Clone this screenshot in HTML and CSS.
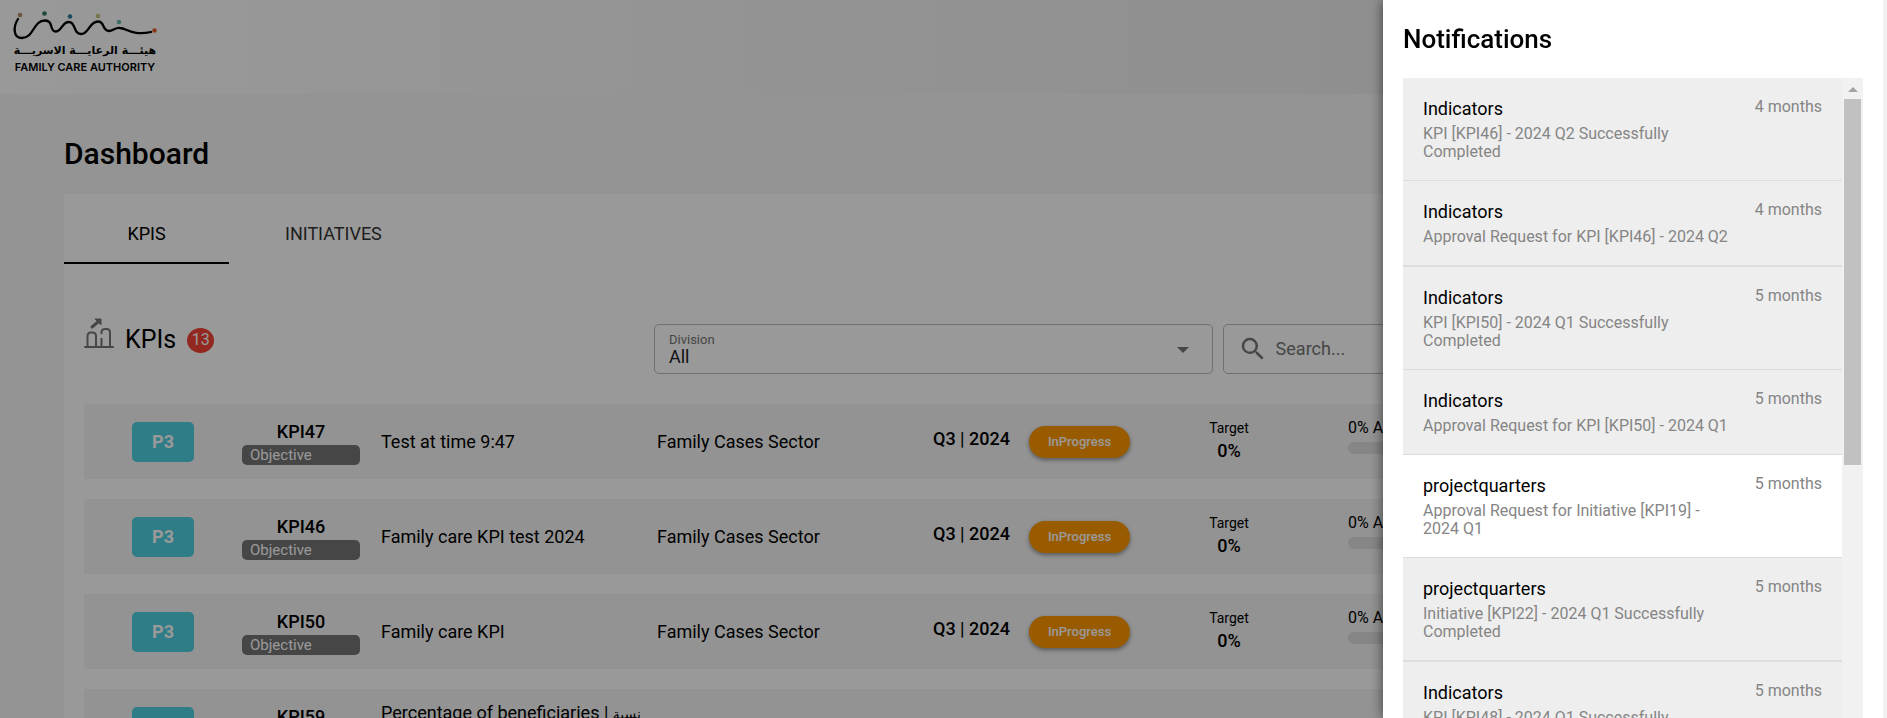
FILE: index.html
```html
<!DOCTYPE html>
<html lang="en">
<head>
<meta charset="utf-8">
<title>Dashboard</title>
<link rel="stylesheet" href="styles.css">
</head>
<body>
<div class="page">
  <header class="topbar">
    <div class="logo">
      <svg class="logo-mark" viewBox="0 0 146 32" aria-hidden="true">
        <path d="M6 9C1 17 1 28 10 28C22 28 21 10.500 33 10.500C42 10.500 37 22 44 21.500C50 21 50 12 57 12C64 12 61 24 69 24C77 24 77 11.500 86 11.500C93 11.500 90 21 97 21C101 21 103 17.500 108 18C115 18.500 121 26 139 22" fill="none" stroke="#000" stroke-width="2.300" stroke-linecap="round"/>
        <circle cx="8" cy="5" r="2.300" fill="#b0906a"/><circle cx="32.500" cy="3.500" r="2.300" fill="#2f7a60"/><circle cx="58" cy="6.500" r="2.300" fill="#2c7fa0"/><circle cx="86" cy="6" r="2.300" fill="#c8c47a"/><circle cx="107" cy="12" r="2.300" fill="#69b8ab"/><circle cx="142.500" cy="20.500" r="2.300" fill="#e0622a"/>
      </svg>
      <span class="logo-ar" lang="ar" dir="rtl">هيئـــة الرعايـــة الاسريـــة</span>
      <span class="logo-en">FAMILY CARE AUTHORITY</span>
    </div>
  </header>
  <main class="main">
    <h1 class="title">Dashboard</h1>
    <section class="card">
      <div class="tabs" role="tablist">
        <button class="tab tab-active" role="tab" aria-selected="true">KPIS</button>
        <button class="tab" role="tab" aria-selected="false">INITIATIVES</button>
      </div>
      <div class="panel">
        <div class="toolbar">
          <div class="heading">
            <svg class="kpi-icon" viewBox="0 0 30 32" aria-hidden="true" fill="none" stroke="#777" stroke-width="2">
              <path d="M1 29H29" stroke-linecap="round"/>
              <path d="M3.500 29V18Q3.500 14.500 7 14.500H8.500Q12 14.500 12 18V29M17.500 16V14.500Q17.500 11 21 11H22.500Q26 11 26 14.500V29M17.500 20V29"/>
              <path d="M8 9L14 4" stroke-width="3" stroke-linecap="round"/>
              <path d="M11 1H17V7Z" fill="#777" stroke-width="1"/>
            </svg>
            <h2 class="subtitle">KPIs</h2>
            <span class="count">13</span>
          </div>
          <div class="field select-field">
            <label class="field-label" for="division">Division</label>
            <select class="select" id="division"><option>All</option></select>
            <svg class="caret" viewBox="0 0 12 6" aria-hidden="true"><path d="M0 0H12L6 6Z" fill="#757575"/></svg>
          </div>
          <div class="field search-field">
            <svg class="search-icon" viewBox="0 0 24 24" aria-hidden="true"><path fill="#757575" d="M15.5 14h-.79l-.28-.27A6.47 6.47 0 0 0 16 9.5 6.5 6.5 0 1 0 9.5 16c1.61 0 3.09-.59 4.23-1.57l.27.28v.79l5 4.99L20.490 19l-4.990-5zm-6 0C7.010 14 5 11.990 5 9.500S7.010 5 9.500 5 14 7.010 14 9.500 11.990 14 9.500 14z"/></svg>
            <input class="search" type="text" placeholder="Search..." aria-label="Search">
          </div>
        </div>
        <div class="rows">
          <article class="row">
            <span class="priority">P3</span>
            <div class="code"><strong>KPI47</strong><span class="tag">Objective</span></div>
            <span>Test at time 9:47</span><span>Family Cases Sector</span>
            <span class="period">Q3 | 2024</span><button class="status">InProgress</button>
            <div class="target"><span class="target-label">Target</span><strong>0%</strong></div>
            <div class="progress"><span class="small">0% Achieved</span><span class="bar"></span></div>
          </article>
          <article class="row">
            <span class="priority">P3</span>
            <div class="code"><strong>KPI46</strong><span class="tag">Objective</span></div>
            <span>Family care KPI test 2024</span><span>Family Cases Sector</span>
            <span class="period">Q3 | 2024</span><button class="status">InProgress</button>
            <div class="target"><span class="target-label">Target</span><strong>0%</strong></div>
            <div class="progress"><span class="small">0% Achieved</span><span class="bar"></span></div>
          </article>
          <article class="row">
            <span class="priority">P3</span>
            <div class="code"><strong>KPI50</strong><span class="tag">Objective</span></div>
            <span>Family care KPI</span><span>Family Cases Sector</span>
            <span class="period">Q3 | 2024</span><button class="status">InProgress</button>
            <div class="target"><span class="target-label">Target</span><strong>0%</strong></div>
            <div class="progress"><span class="small">0% Achieved</span><span class="bar"></span></div>
          </article>
          <article class="row">
            <span class="priority">P3</span>
            <div class="code"><strong>KPI59</strong></div>
            <span class="name-long">Percentage of beneficiaries | <bdi class="arabic">نسبة</bdi></span>
          </article>
        </div>
      </div>
    </section>
  </main>
</div>
<div class="backdrop"></div>
<aside class="drawer">
  <h2 class="drawer-title">Notifications</h2>
  <div class="feed">
    <ul class="list">
      <li class="item"><div class="text"><h3>Indicators</h3><p>KPI [KPI46] - 2024 Q2 Successfully Completed</p></div><time>4 months</time></li>
      <li class="item item-divided"><div class="text"><h3>Indicators</h3><p>Approval Request for KPI [KPI46] - 2024 Q2</p></div><time>4 months</time></li>
      <li class="item"><div class="text"><h3>Indicators</h3><p>KPI [KPI50] - 2024 Q1 Successfully Completed</p></div><time>5 months</time></li>
      <li class="item"><div class="text"><h3>Indicators</h3><p>Approval Request for KPI [KPI50] - 2024 Q1</p></div><time>5 months</time></li>
      <li class="item item-read"><div class="text"><h3>projectquarters</h3><p>Approval Request for Initiative [KPI19] - 2024 Q1</p></div><time>5 months</time></li>
      <li class="item item-divided"><div class="text"><h3>projectquarters</h3><p>Initiative [KPI22] - 2024 Q1 Successfully Completed</p></div><time>5 months</time></li>
      <li class="item"><div class="text"><h3>Indicators</h3><p>KPI [KPI48] - 2024 Q1 Successfully</p></div><time>5 months</time></li>
    </ul>
    <div class="scrollbar" aria-hidden="true">
      <svg class="scroll-up" viewBox="0 0 10 5"><path d="M5 0L10 5H0Z" fill="#a3a3a3"/></svg>
      <div class="thumb"></div>
    </div>
  </div>
</aside>
</body>
</html>
```
FILE: styles.css
```css
* { box-sizing: border-box; }
body { margin: 0; height: 100vh; overflow: hidden; background: #f7f7f7; color: #000; font: 18px/22px Roboto, "DejaVu Sans", sans-serif; }
h1, h2, h3, p, ul { margin: 0; padding: 0; font-weight: 400; }
button, input, select { font: inherit; color: inherit; border: 0; background: none; }
strong { font-weight: 500; }
.page { height: 100vh; overflow: hidden; }
.topbar { height: 94px; padding: 10px 12px; background: linear-gradient(to right, #fff, #e9e9e9); }
.logo { width: 146px; display: flex; flex-direction: column; align-items: center; }
.logo-mark { width: 146px; height: 32px; }
.logo-ar { font: 700 11px/18px "DejaVu Sans", sans-serif; white-space: nowrap; }
.logo-en { font: 600 11px/14px Inter, sans-serif; white-space: nowrap; }
.main { padding: 40px 64px 0; }
.title { font-size: 30px; line-height: 40px; font-weight: 500; margin-bottom: 20px; }
.card { background: #fff; }
.tabs { display: flex; }
.tab { height: 70px; padding: 12px 56px 0; border-bottom: 2px solid transparent; color: #333; }
.tab-active { width: 165px; padding: 12px 0 0; color: #000; border-color: #000; }
.panel { padding: 54px 20px 0; }
.toolbar { display: flex; gap: 10px; align-items: center; height: 62px; margin-bottom: 24px; }
.heading { display: flex; align-items: center; align-self: flex-start; width: 560px; height: 44px; gap: 11px; }
.kpi-icon { width: 30px; height: 32px; align-self: flex-start; }
.subtitle { font-size: 25px; line-height: 40px; }
.count { width: 27px; height: 25px; border-radius: 50%; background: #f44336; color: #fff; font-size: 16px; line-height: 24px; text-align: center; }
.field { height: 50px; border: 1px solid #bbb; border-radius: 5px; display: flex; }
.select-field { flex: 558; flex-direction: column; padding: 7px 14px; position: relative; }
.field-label { font-size: 13px; line-height: 15px; color: #757575; }
.select { appearance: none; padding: 0; line-height: 20px; text-align: left; color: #222; }
.caret { position: absolute; right: 23px; top: 22px; width: 12px; height: 6px; }
.search-field { flex: 581; align-items: center; padding: 0 14px; gap: 8px; }
.search-icon { width: 30px; height: 30px; }
.search { flex: 1; padding: 0; outline: 0; }
.search::placeholder { color: #757575; opacity: 1; }
.rows { display: grid; gap: 20px; }
.row { height: 75px; background: #f5f5f5; display: grid; align-items: center; grid-template-columns: 158fr 139fr 276fr 276fr 96fr 140fr 120fr 59fr 455fr; white-space: nowrap; }
.row > * { min-width: 0; }
.priority { justify-self: center; width: 62px; height: 40px; line-height: 40px; border-radius: 5px; background: #4dd0e1; color: #fff; font-weight: 700; text-align: center; }
.code { width: 118px; height: 48px; padding-top: 3px; display: flex; flex-direction: column; gap: 2px; text-align: center; }
.tag { height: 20px; line-height: 20px; padding: 0 8px; border-radius: 5px; background: #757575; color: #fff; font-size: 15px; text-align: left; }
.period { font-weight: 500; padding-bottom: 6px; }
.status { width: 101px; height: 32px; padding: 0; border-radius: 16px; background: #ff9800; color: #fff; font-size: 13px; font-weight: 500; box-shadow: 0 2px 4px rgba(0,0,0,.4); }
.target { display: flex; flex-direction: column; gap: 1px; padding-bottom: 4px; text-align: center; }
.target-label { font-size: 14px; }
.small { font-size: 16px; }
.progress { grid-column: 9; display: flex; flex-direction: column; gap: 3px; padding-bottom: 12px; }
.bar { height: 12px; width: 140px; border-radius: 6px; background: #e0e0e0; }
.name-long { padding-bottom: 26px; }
.arabic { font-size: 14px; }
.backdrop { position: fixed; inset: 0; background: rgba(0,0,0,.4); }
.drawer { position: fixed; top: 0; right: 4px; bottom: 0; width: 500px; padding: 20px 20px 0; background: #fff; display: flex; flex-direction: column; box-shadow: 4px 0 0 #f1f1f1, 0 0 12px rgba(0,0,0,.6); }
.drawer-title { font-size: 26px; line-height: 38px; font-weight: 500; margin-bottom: 20px; }
.feed { flex: 1; min-height: 0; display: flex; overflow: hidden; }
.list { flex: 1; list-style: none; }
.item { display: flex; justify-content: space-between; padding: 20px 20px 19px; border-bottom: 1px solid #ddd; background: #eee; }
.item-divided { border-bottom-width: 2px; }
.item-read { background: #fff; }
.text { width: 310px; }
.item h3 { font-size: 18px; line-height: 22px; margin-bottom: 5px; }
.item p { font-size: 16px; line-height: 18px; color: #858585; }
.item time { font-size: 16px; line-height: 18px; color: #858585; }
.scrollbar { width: 21px; padding: 9px 2px 0; background: #f1f1f1; display: flex; flex-direction: column; align-items: center; gap: 7px; }
.scroll-up { width: 10px; height: 5px; }
.thumb { width: 17px; height: 366px; background: #c1c1c1; }
```
